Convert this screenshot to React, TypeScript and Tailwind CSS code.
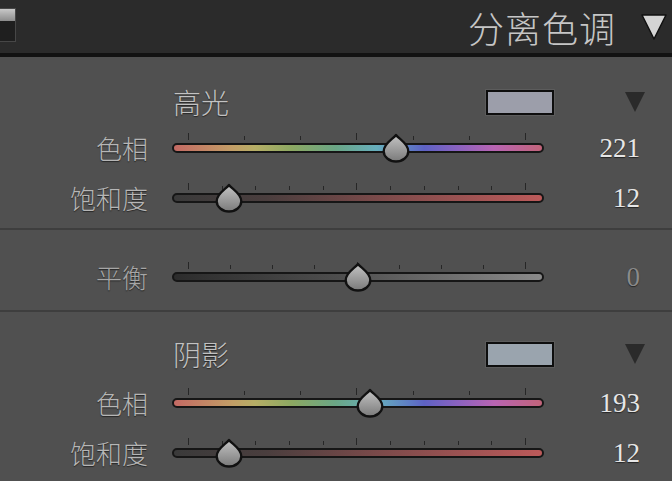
import { useId } from 'react';

const cjk = "font-['Noto_Sans_CJK_SC','Noto_Sans',sans-serif] font-light";
const serif = "font-['Liberation_Serif','Noto_Sans_CJK_SC',serif]";
const emboss = '[text-shadow:0_1px_1px_rgba(0,0,0,0.55)]';

const HUE = 'bg-[linear-gradient(to_right,#c46a64,#c29e66_16%,#b6ae66_22%,#8ca862_32%,#6aa686_44%,#66aebc_55%,#5e7cc4_64%,#5e62c4_68%,#8a62c0_77%,#b864b2_87%,#c2647a)]';
const SAT = 'bg-[linear-gradient(to_right,#3a3a3a,#4a3e3e_25%,#7a4a4a_55%,#bc5a5a)]';
const BAL = 'bg-[linear-gradient(to_right,#2c2c2c,#4e4e4e_45%,#8a8a8a)]';

function Thumb({ pct }: { pct: number }) {
  const id = useId();
  return (
    <svg
      viewBox="0 0 30 30"
      className="absolute top-1/2 h-[30px] w-[30px] -translate-x-1/2 -translate-y-1/2"
      style={{ left: `${pct}%` }}
    >
      <defs>
        <linearGradient id={id} x1="0" y1="0" x2="0" y2="1">
          <stop offset="0" stopColor="#c4c4c4" />
          <stop offset="1" stopColor="#7a7a7a" />
        </linearGradient>
      </defs>
      <path
        d="M15 2 C17.8 6 27.3 10.5 27.3 18.3 A12.3 10.2 0 0 1 2.7 18.3 C2.7 10.5 12.2 6 15 2 Z"
        fill={`url(#${id})`}
        stroke="#111"
        strokeWidth="2.3"
        strokeLinejoin="round"
      />
    </svg>
  );
}

function Slider({ label, value, pct, track, ticks, dim }: {
  label: string;
  value: string;
  pct: number;
  track: string;
  ticks: number;
  dim?: boolean;
}) {
  const mid = Math.floor(ticks / 2);
  return (
    <div className="flex h-[50px] items-center">
      <div className={`w-[148px] text-right text-[26px] leading-none ${cjk} ${emboss} ${dim ? 'text-[#a6a6a6]' : 'text-[#b6b6b6]'}`}>
        {label}
      </div>
      <div className={`relative ml-[24px] h-[10px] w-[372px] rounded-full border-2 border-[#161616] ${track}`}>
        <div className="absolute bottom-[11px] left-[14px] right-[16px] flex items-end justify-between">
          {Array.from({ length: ticks }).map((_, i) => (
            <div
              key={i}
              className={`w-px bg-[#262626] ${i === 0 || i === mid || i === ticks - 1 ? 'h-[7px]' : 'h-[4px]'}`}
            />
          ))}
        </div>
        <div className="absolute inset-y-0 left-[15px] right-[16px]">
          <Thumb pct={pct} />
        </div>
      </div>
      <div className={`w-[96px] text-right text-[27px] leading-none ${serif} ${emboss} ${dim ? 'text-[#8a8a8a]' : 'text-[#e6e6e6]'}`}>
        {value}
      </div>
    </div>
  );
}

function SectionHead({ label, swatch }: { label: string; swatch: string }) {
  return (
    <div className="flex h-[42px] items-center">
      <div className={`ml-[173px] w-[312px] text-[28px] leading-none text-[#c2c2c2] ${cjk} ${emboss}`}>{label}</div>
      <div className="rounded-[1px] p-px bg-[#5c5c5c]">
        <div className={`h-[25px] w-[68px] border-[2.5px] border-[#0e0e0e] ${swatch}`} />
      </div>
      <svg viewBox="0 0 22 22" className="ml-[69px] h-[22px] w-[22px]">
        <path d="M1 1 H21 L11 21 Z" fill="#2a2a2a" />
      </svg>
    </div>
  );
}

export default function App() {
  return (
    <div className="h-[481px] w-[672px] overflow-hidden bg-[#505050]">
      {/* panel header */}
      <div className="flex h-[53px] items-center justify-between bg-[#2b2b2b]">
        <div className="mb-[4px] flex h-[34px] w-[16px] flex-col border-y border-r border-[#474747]">
          <div className="h-[12px] bg-gradient-to-b from-[#c8c8c8] to-[#8c8c8c]" />
          <div className="flex-1 bg-[#1f1f1f]" />
        </div>
        <div className="flex items-center">
          <span className={`text-[36px] leading-none tracking-[1px] text-[#c6c6c6] ${cjk}`}>分离色调</span>
          <svg viewBox="0 0 28 28" className="ml-[24px] mr-[4px] h-[28px] w-[28px]">
            <path d="M2 2 H26 L14 26 Z" fill="#d4d4d4" stroke="#111" strokeWidth="1.5" strokeLinejoin="round" />
          </svg>
        </div>
      </div>
      <div className="h-[4px] bg-[#121212]" />

      {/* highlights */}
      <div className="pt-[24px] pb-[5px]">
        <SectionHead label="高光" swatch="bg-[#9c9eaa]" />
        <Slider label="色相" value="221" pct={61.4} track={HUE} ticks={7} />
        <Slider label="饱和度" value="12" pct={12} track={SAT} ticks={11} />
      </div>
      <div className="h-[2px] bg-[#3e3e3e]" />

      {/* balance */}
      <div className="pt-[22px] pb-[8px]">
        <Slider label="平衡" value="0" pct={50} track={BAL} ticks={9} dim />
      </div>
      <div className="h-[2px] bg-[#3e3e3e]" />

      {/* shadows */}
      <div className="pt-[21px]">
        <SectionHead label="阴影" swatch="bg-[#9aa4ae]" />
        <div className="h-[3px]" />
        <Slider label="色相" value="193" pct={53.6} track={HUE} ticks={7} />
        <Slider label="饱和度" value="12" pct={12} track={SAT} ticks={11} />
      </div>
    </div>
  );
}
